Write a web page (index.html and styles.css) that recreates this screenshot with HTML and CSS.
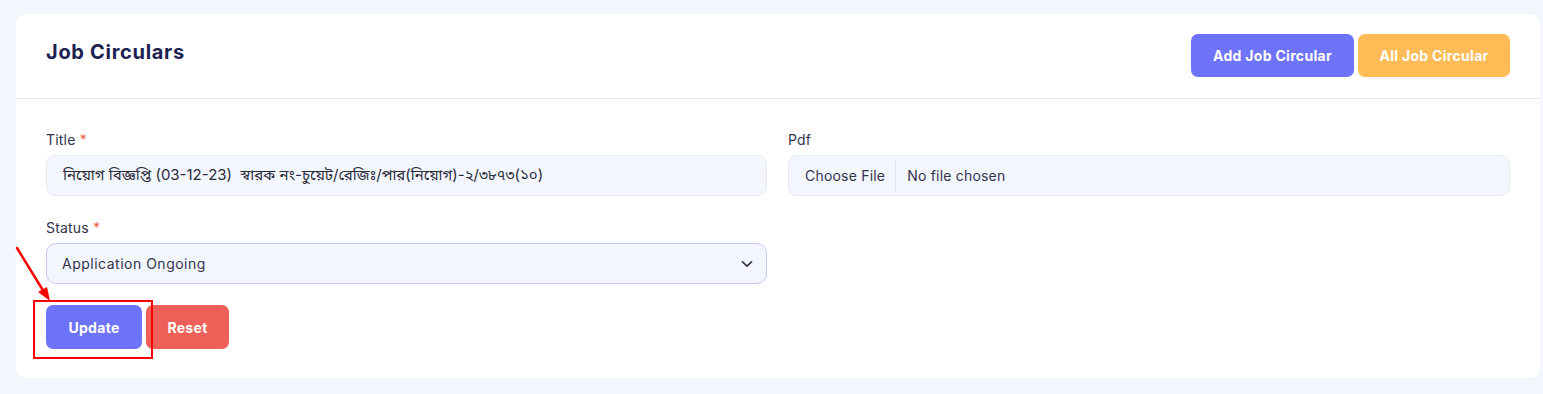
FILE: index.html
```html
<!DOCTYPE html>
<html lang="en">
<head>
<meta charset="utf-8">
<title>Job Circulars</title>
<link rel="stylesheet" href="styles.css">
</head>
<body>
<div class="card">
  <div class="card-header">
    <h1 class="card-title">Job Circulars</h1>
    <div class="header-actions">
      <a class="btn btn-primary btn-lg" href="#">Add Job Circular</a>
      <a class="btn btn-warning btn-lg" href="#">All Job Circular</a>
    </div>
  </div>
  <form class="card-body">
    <div class="form-grid">
      <div class="field">
        <label class="field-label">Title <span class="req">*</span></label>
        <input class="form-control" type="text" value="নিয়োগ বিজ্ঞপ্তি (03-12-23)  স্বারক নং-চুয়েট/রেজিঃ/পার(নিয়োগ)-২/৩৮৭৩(১০)">
      </div>
      <div class="field">
        <label class="field-label">Pdf</label>
        <div class="form-control file-control">
          <span class="file-btn">Choose File</span>
          <span class="file-name">No file chosen</span>
        </div>
      </div>
      <div class="field">
        <label class="field-label">Status <span class="req">*</span></label>
        <div class="select-wrap">
          <select class="form-control form-select">
            <option>Application Ongoing</option>
          </select>
          <svg class="chevron" width="12" height="8" viewBox="0 0 12 8"><path d="M1.5 1.8 6 6.2 10.5 1.8" fill="none" stroke="#3a3a4a" stroke-width="1.7" stroke-linecap="round" stroke-linejoin="round"/></svg>
        </div>
      </div>
    </div>
    <div class="form-actions">
      <button type="button" class="btn btn-primary">Update</button>
      <button type="reset" class="btn btn-danger">Reset</button>
      <span class="highlight-box"></span>
    </div>
  </form>
</div>
<svg class="annot-arrow" width="60" height="70" viewBox="0 0 60 70">
  <line x1="17" y1="8" x2="44" y2="52" stroke="#ff0000" stroke-width="2.5" stroke-linecap="round"/>
  <polygon points="50,61 38,52 47,47" fill="#ff0000"/>
</svg>
</body>
</html>
```
FILE: styles.css
```css
* { box-sizing: border-box; }

body {
  margin: 0;
  background: #f3f6fd;
  padding: 14px 3px 16px 16px;
  font-family: Inter, "Noto Sans", "Noto Sans Bengali", "Noto Serif Bengali", "Lohit Bengali", sans-serif;
  color: #33344d;
  position: relative;
}

.card {
  background: #ffffff;
  border-radius: 10px;
  width: 1524px;
}

.card-header {
  display: flex;
  justify-content: space-between;
  align-items: flex-start;
  padding: 20px 30px 20px 30px;
  border-bottom: 1px solid #e6e7eb;
  height: 85px;
}

.card-title {
  margin: 0;
  font-size: 20px;
  line-height: 36px;
  font-weight: 700;
  color: #1c2250;
  letter-spacing: 0.7px;
}

.header-actions {
  display: flex;
  gap: 4px;
}

.btn {
  display: inline-flex;
  align-items: center;
  justify-content: center;
  border: none;
  border-radius: 7px;
  color: #ffffff;
  font-family: inherit;
  font-size: 14px;
  font-weight: 700;
  letter-spacing: 0.3px;
  text-decoration: none;
  height: 44px;
  cursor: pointer;
}

.btn-lg {
  height: 43px;
}

.btn-primary { background: #6e73fb; }
.btn-warning { background: #ffbb55; }
.btn-danger { background: #ef6158; }

.header-actions .btn-primary { width: 163px; }
.header-actions .btn-warning { width: 152px; }

.card-body {
  padding: 30px 30px 29px 30px;
  margin: 0;
}

.form-grid {
  display: grid;
  grid-template-columns: 721px 722px;
  column-gap: 21px;
  row-gap: 21px;
}

.field {
  display: flex;
  flex-direction: column;
}

.field-label {
  font-size: 14px;
  line-height: 21px;
  color: #33344d;
  margin-bottom: 5px;
  letter-spacing: 0.2px;
}

.req { color: #f06548; }

.form-control {
  height: 41px;
  width: 100%;
  background: #f3f6fd;
  border: 1px solid #e7eaf0;
  border-radius: 9px;
  padding: 0 16px;
  font-family: inherit;
  font-size: 14px;
  letter-spacing: 0.4px;
  color: #33344d;
  outline: none;
}

input.form-control {
  font-size: 15px;
  letter-spacing: 0;
  color: #2a2a3a;
}

.file-control {
  display: flex;
  align-items: center;
  padding: 0;
  letter-spacing: 0.2px;
}

.file-btn {
  padding: 0 10px 0 16px;
  border-right: 1px solid #e3e6ec;
  line-height: 31px;
  color: #33344d;
}

.file-name {
  padding-left: 11px;
}

.select-wrap {
  position: relative;
}

.form-select {
  appearance: none;
  -webkit-appearance: none;
  border-color: #c6c8f9;
  border-radius: 10px;
  padding-left: 15px;
  letter-spacing: 0.5px;
}

.chevron {
  position: absolute;
  right: 14px;
  top: 17px;
  pointer-events: none;
}

.form-actions {
  display: flex;
  gap: 4px;
  margin-top: 21px;
  position: relative;
}

.form-actions .btn-primary { width: 96px; }
.form-actions .btn-danger { width: 83px; }

.highlight-box {
  position: absolute;
  left: -13px;
  top: -5px;
  width: 120px;
  height: 59px;
  border: 2px solid #ff0000;
  pointer-events: none;
}

.annot-arrow {
  position: absolute;
  left: 0;
  top: 240px;
  pointer-events: none;
}
```
